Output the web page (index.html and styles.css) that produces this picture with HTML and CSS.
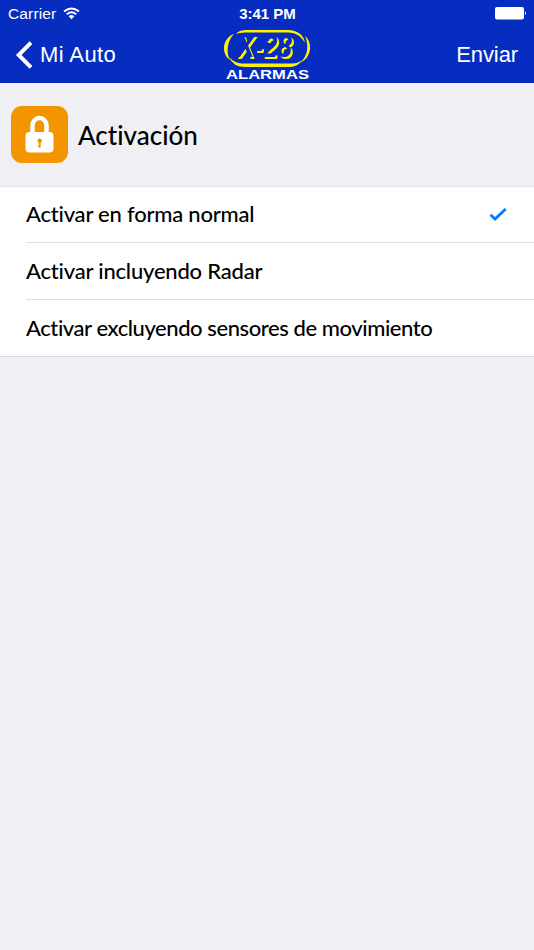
FILE: index.html
```html
<!DOCTYPE html>
<html lang="es">
<head>
<meta charset="utf-8">
<title>Activación</title>
<link rel="stylesheet" href="styles.css">
</head>
<body>
<header class="top">
  <div class="status">
    <div class="carrier"><span>Carrier</span>
      <svg class="wifi" width="17" height="13" viewBox="0 0 17 13"><g fill="none" stroke="#fff" stroke-width="1.9"><path d="M1 4.500Q8.500-1.700 16 4.500"/><path d="M3.700 7.400Q8.500 3.300 13.300 7.400"/></g><path fill="#fff" d="M5.600 9.200Q8.500 6.900 11.400 9.200L8.500 12.200Z"/></svg>
    </div>
    <div class="time">3:41 PM</div>
    <svg class="battery" width="32" height="13" viewBox="0 0 32 13"><rect width="29" height="12.500" rx="2" fill="#fff"/><path d="M30 4.200q2 2 0 4z" fill="#fff"/></svg>
  </div>
  <nav class="nav">
    <div class="back"><svg width="18" height="28" viewBox="0 0 18 28"><path d="M16 1.700L3.700 14L16 26.300" fill="none" stroke="#fff" stroke-width="4"/></svg><span>Mi Auto</span></div>
    <svg class="logo" width="90" height="53" viewBox="222 28 90 53">
      <g fill="#fff100">
        <path d="M236 34C239 30.300 244 30 250 30H288C297 30 304 35 305 43C301 36 296 32.500 288 32.500H249C242 32.500 239 33 236 34Z"/>
        <path d="M234 34C222 38 221 54 230 60C226 53 227 41 234 34Z"/>
        <path d="M229 57C234 62 238 63.500 244 63.500H292Q298 63.500 302 60Q298 67 290 67H245Q233 67 229 57Z"/>
        <path d="M305 36C312.500 42 312.500 57 300 63C308 56 309 45 305 36Z"/>
      </g>
      <text class="brand" x="237" y="57" textLength="55" lengthAdjust="spacingAndGlyphs">X-28</text>
      <text class="sub" x="226" y="79" textLength="83" lengthAdjust="spacingAndGlyphs">ALARMAS</text>
    </svg>
    <div class="send">Enviar</div>
  </nav>
</header>
<section class="heading">
  <svg class="lock" width="57" height="57" viewBox="0 0 57 57"><rect width="57" height="57" rx="11" fill="#f39500"/><path d="M21.500 27V19.500a7 7.500 0 0 1 14 0v8" fill="none" stroke="#fff" stroke-width="4.500"/><rect x="14.500" y="26" width="28" height="20.500" rx="4" fill="#fff"/><path fill="#f39500" d="M28.500 32.500a2.300 2.300 0 0 1 1.200 4.300v4.700h-2.700v-1.800h.7v-2.900a2.300 2.300 0 0 1 .8-4.300z"/></svg>
  <h1 class="title">Activación</h1>
</section>
<main class="list">
  <div class="row first"><span class="label one">Activar en forma normal</span><svg class="check" width="18" height="14" viewBox="0 0 18 14"><path d="M1.500 6.700L6 11L16.700 1" fill="none" stroke="#007aff" stroke-width="2.800"/></svg></div>
  <div class="row"><span class="label two">Activar incluyendo Radar</span></div>
  <div class="row"><span class="label three">Activar excluyendo sensores de movimiento</span></div>
</main>
</body>
</html>
```
FILE: styles.css
```css
* { box-sizing: border-box; }
body { margin: 0; min-height: 950px; background: #efeff4; color: #000; font-family: Lato, sans-serif; font-variant-ligatures: none; }
.top { height: 83px; background: #062cc0; color: #fff; font-family: "Liberation Sans", sans-serif; }
.status { display: grid; grid-template-columns: 1fr auto 1fr; height: 28px; padding: 0 7px 0 8px; font-size: 15.5px; line-height: 28px; }
.carrier { display: flex; align-items: center; gap: 7px; letter-spacing: .15px; }
.wifi { margin-top: -1px; }
.time { font-weight: bold; font-size: 15px; }
.battery { justify-self: end; margin-top: 7px; }
.nav { display: grid; grid-template-columns: 1fr 90px 1fr; height: 55px; padding: 0 16px 0 15px; font-size: 22px; line-height: 54px; }
.back { display: flex; align-items: center; gap: 7px; height: 54px; letter-spacing: .4px; }
.send { text-align: right; letter-spacing: -.1px; }
.brand { font: italic bold 31px "Liberation Sans", sans-serif; fill: #062cc0; filter: drop-shadow(2.6px 2.2px 0 #fff100); }
.sub { font: bold 12px "Liberation Sans", sans-serif; fill: #fff; }
.heading { display: flex; align-items: center; gap: 10px; height: 103px; padding: 0 11px; }
.title { margin: 0; font-size: 26px; font-weight: 500; letter-spacing: 0; }
.list { background: #fff; border-top: 1px solid #e2e2e6; border-bottom: 1px solid #d9d9de; }
.row { display: flex; justify-content: space-between; align-items: center; height: 57px; margin-left: 26px; padding-right: 27px; border-bottom: 1px solid #e0e0e2; font-size: 22px; font-weight: 500; white-space: nowrap; }
.first { height: 56px; }
.row:last-child { border-bottom: 0; height: 56px; }
.label { position: relative; top: -1px; }
.one { letter-spacing: -.22px; }
.two { letter-spacing: -.2px; }
.three { letter-spacing: -.43px; }
```
